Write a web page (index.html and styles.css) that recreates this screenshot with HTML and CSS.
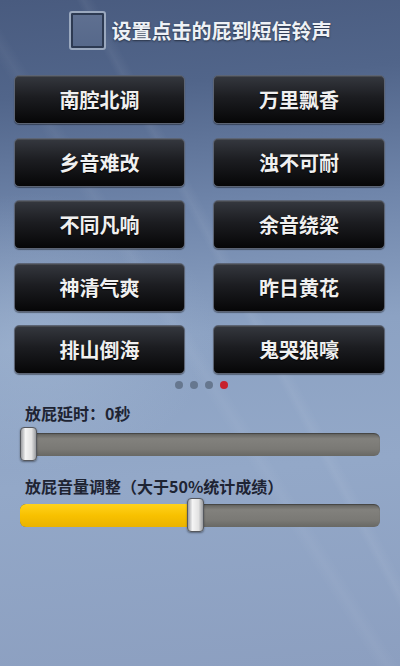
FILE: index.html
```html
<!doctype html>
<html lang="zh-CN">
  <head>
    <meta charset="UTF-8" />
    <meta name="viewport" content="width=device-width, initial-scale=1.0" />
    <title>放屁</title>
    <link rel="stylesheet" href="styles.css">
  </head>
  <body>
    <div class="screen">
      <div class="ring-option">
        <span class="checkbox"></span>
        <span class="ring-label">设置点击的屁到短信铃声</span>
      </div>

      <!-- 声音按钮 -->
      <div class="sound-grid">
        <button class="sound-btn">南腔北调</button>
        <button class="sound-btn">万里飘香</button>
        <button class="sound-btn">乡音难改</button>
        <button class="sound-btn">浊不可耐</button>
        <button class="sound-btn">不同凡响</button>
        <button class="sound-btn">余音绕梁</button>
        <button class="sound-btn">神清气爽</button>
        <button class="sound-btn">昨日黄花</button>
        <button class="sound-btn">排山倒海</button>
        <button class="sound-btn">鬼哭狼嚎</button>
      </div>

      <div class="pager">
        <span class="dot"></span>
        <span class="dot"></span>
        <span class="dot"></span>
        <span class="dot active"></span>
      </div>

      <div class="setting delay">
        <div class="setting-label">放屁延时：0秒</div>
        <div class="slider">
          <div class="track"></div>
          <div class="thumb" style="left: 0%"></div>
        </div>
      </div>

      <div class="setting volume">
        <div class="setting-label">放屁音量调整（大于50%统计成绩）</div>
        <div class="slider">
          <div class="track"><div class="fill" style="width: 47.5%"></div></div>
          <div class="thumb" style="left: 46.4%"></div>
        </div>
      </div>
    </div>
  </body>
</html>
```

FILE: styles.css
```css
body {
  margin: 0;
  padding: 0;
  background: #8da1c2;
}

.screen {
  width: 400px;
  height: 666px;
  box-sizing: border-box;
  padding-top: 11px;
  overflow: hidden;
  font-family: "Noto Sans CJK SC", "Noto Sans", sans-serif;
  background:
    linear-gradient(62deg, transparent 57%, rgba(255, 255, 255, 0.05) 58%, transparent 59.5%),
    linear-gradient(58deg, transparent 46%, rgba(255, 255, 255, 0.04) 47.5%, transparent 49%),
    radial-gradient(ellipse 260px 200px at 8% 50%, rgba(175, 195, 220, 0.4), transparent 70%),
    linear-gradient(175deg, #495b7f 0%, #51658a 14%, #6f85aa 32%, #8ca2c3 50%, #93a8c8 70%, #8c9fc0 100%);
}

/* 铃声设置 */
.ring-option {
  display: flex;
  align-items: center;
  justify-content: center;
  gap: 6px;
  height: 39px;
}

.checkbox {
  width: 33px;
  height: 35px;
  border: 2px solid #9aa8be;
  border-radius: 3px;
  background: linear-gradient(#5f7091, #56688a);
  box-shadow: inset 0 0 0 2px #2d3a52;
}

.ring-label {
  font-size: 20px;
  font-weight: 700;
  color: #eef1f6;
  text-shadow: 0 1px 2px rgba(0, 0, 0, 0.5);
}

/* 按钮 */
.sound-grid {
  display: grid;
  grid-template-columns: 171px 172px;
  grid-auto-rows: 49px;
  column-gap: 28px;
  row-gap: 13.5px;
  margin-top: 25px;
  padding-left: 14px;
}

.sound-btn {
  border: 1px solid #5c6474;
  border-radius: 5px;
  background: linear-gradient(#35383f 0%, #1c1d21 45%, #060607 100%);
  box-shadow: 0 1px 1px rgba(0, 0, 0, 0.4), inset 0 1px 0 rgba(255, 255, 255, 0.1);
  color: #f0f0f0;
  font-family: "Noto Sans CJK SC", sans-serif;
  font-size: 20px;
  font-weight: 700;
  text-shadow: 0 1px 1px rgba(0, 0, 0, 0.8);
  padding: 0;
}

.pager {
  display: flex;
  justify-content: center;
  gap: 7px;
  margin-top: 7px;
  padding-left: 2px;
}

.dot {
  width: 8px;
  height: 8px;
  border-radius: 50%;
  background: #66778f;
}

.dot.active {
  background: #c7232c;
}

/* 滑动条 */
.setting {
  padding: 0 20px;
}

.delay {
  margin-top: 14px;
}

.volume {
  margin-top: 15px;
}

.setting-label {
  font-size: 16px;
  line-height: 20px;
  font-weight: 700;
  color: #1e2433;
  padding-left: 5px;
  margin-bottom: 4px;
}

.volume .setting-label {
  margin-bottom: 2px;
}

.slider {
  position: relative;
  height: 34px;
  display: flex;
  align-items: center;
}

.track {
  flex: 1;
  height: 23px;
  border-radius: 6px;
  overflow: hidden;
  background: linear-gradient(#5f5f5c 0%, #82817d 25%, #7a7975 70%, #686864 100%);
  box-shadow: inset 0 1px 1px rgba(0, 0, 0, 0.3);
}

.fill {
  height: 100%;
  background: linear-gradient(#ffd21c 0%, #f8c100 50%, #eab300 100%);
}

.thumb {
  position: absolute;
  top: 0;
  width: 15px;
  height: 32px;
  border: 1px solid #55585e;
  border-radius: 4px;
  background: linear-gradient(90deg, #9c9ea2 0%, #f4f4f4 30%, #e2e2e2 70%, #9a9ca0 100%);
  box-shadow: 0 1px 2px rgba(0, 0, 0, 0.4);
}
```
